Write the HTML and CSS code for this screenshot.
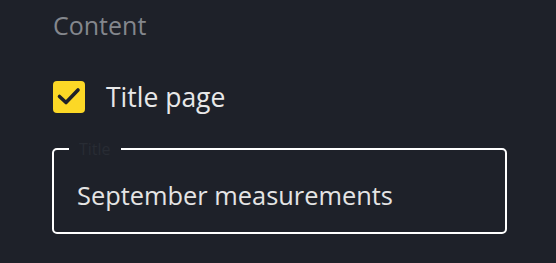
FILE: index.html
```html
<!DOCTYPE html>
<html>
<head>
<meta charset="utf-8">
<link rel="stylesheet" href="styles.css">
</head>
<body>
<div class="panel">
  <div class="section-title">Content</div>
  <label class="check-row">
    <span class="checkbox">
      <svg viewBox="0 0 32 32" width="32" height="32"><path d="M6.5 15.5 L13 21.5 L25 9" fill="none" stroke="#1e2129" stroke-width="3.6" stroke-linecap="round" stroke-linejoin="round"/></svg>
    </span>
    <span class="check-label">Title page</span>
  </label>
  <fieldset class="field">
    <legend class="field-legend">Title</legend>
    <div class="field-value">September measurements</div>
  </fieldset>
</div>
</body>
</html>
```
FILE: styles.css
```css
html, body {
  margin: 0;
  padding: 0;
  background: #1e2129;
}
body {
  width: 556px;
  height: 263px;
  overflow: hidden;
  font-family: "Open Sans", "Noto Sans", sans-serif;
}
.panel {
  display: flex;
  flex-direction: column;
  padding: 9px 0 0 52px;
}
.section-title {
  font-size: 25px;
  line-height: 32px;
  color: #84878d;
  padding-left: 1px;
}
.check-row {
  display: flex;
  align-items: center;
  gap: 21px;
  margin-top: 40px;
  padding-left: 1px;
}
.checkbox {
  width: 32px;
  height: 32px;
  border-radius: 4px;
  background: #fcd826;
  display: flex;
}
.check-label {
  font-size: 26.5px;
  line-height: 32px;
  color: #e8e8e8;
}
.field {
  margin: 25px 0 0 0;
  width: 455px;
  height: 96px;
  box-sizing: border-box;
  border: 2.5px solid #ffffff;
  border-radius: 5px;
  padding: 0 0 0 15px;
  min-width: 0;
}
.field-legend {
  padding: 0 10px;
  font-size: 16px;
  line-height: 22px;
  color: #282c34;
}
.field-value {
  margin-top: 19px;
  padding-left: 8px;
  font-size: 25.4px;
  line-height: 32px;
  color: #e4e4e4;
}
```
